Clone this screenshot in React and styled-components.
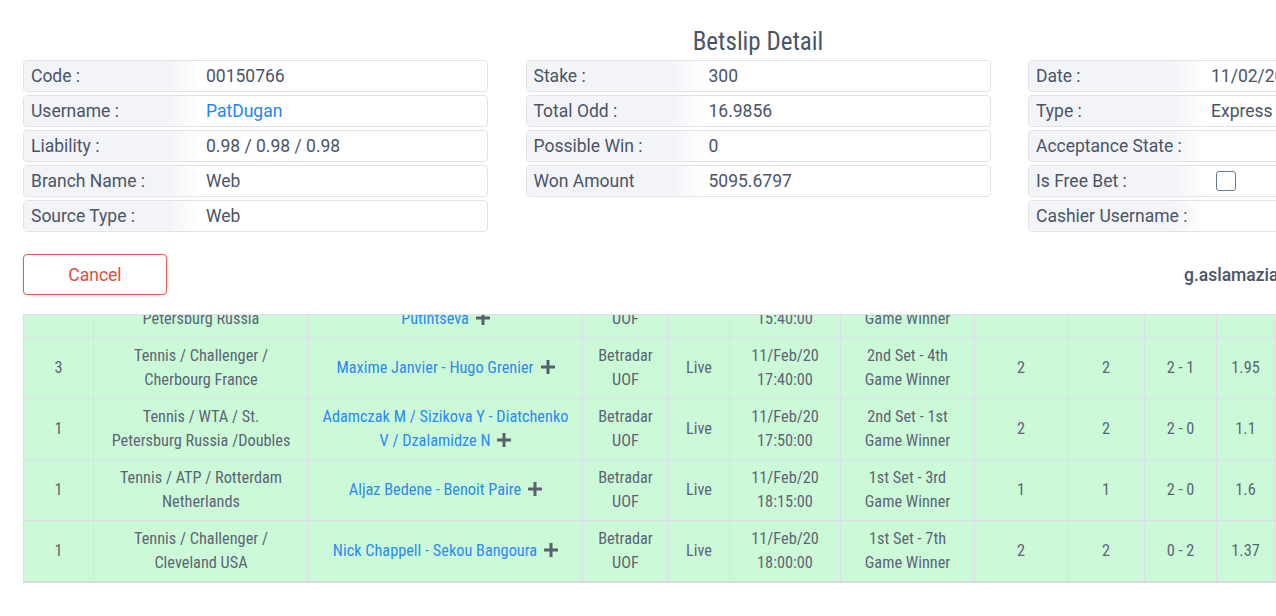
import React, { useLayoutEffect, useRef } from 'react';
import styled, { createGlobalStyle } from 'styled-components';

const GlobalStyle = createGlobalStyle`
  html, body {
    margin: 0;
    padding: 0;
    background: #fff;
    overflow: hidden;
  }
  body {
    font-family: Roboto, "Liberation Sans", sans-serif;
    color: #4a5468;
  }
`;

const Page = styled.div`
  width: 1276px;
  height: 616px;
  display: flex;
  flex-direction: column;
  overflow: hidden;
`;

const Header = styled.div`
  flex-shrink: 0;
  width: 1470px;
  padding: 27px 0 19px 23px;
  background: #fff;
`;

const Title = styled.h2`
  margin: 0 0 3px;
  height: 30px;
  line-height: 30px;
  text-align: center;
  font-family: "Roboto Condensed", Roboto, sans-serif;
  font-weight: 400;
  font-size: 25px;
  color: #4a5468;
`;

const Grid = styled.div`
  display: grid;
  grid-template-columns: repeat(3, 465px);
  column-gap: 37.5px;
`;

const FieldColumn = styled.div`
  display: flex;
  flex-direction: column;
  gap: 3px;
`;

const Field = styled.div`
  box-sizing: border-box;
  height: 32px;
  display: flex;
  align-items: stretch;
  border: 1px solid #e1e3e9;
  border-radius: 4px;
  overflow: hidden;
  font-size: 17.5px;
`;

const Label = styled.div`
  flex: 0 0 175px;
  box-sizing: border-box;
  display: flex;
  align-items: center;
  padding-left: 7px;
  background: linear-gradient(90deg, #f3f4f7 0%, #f3f4f7 82%, #ffffff 100%);
  color: #4a5468;
`;

const Value = styled.div`
  flex: 1;
  display: flex;
  align-items: center;
  padding-left: 7px;
  white-space: nowrap;
  color: ${({ $link }) => ($link ? '#1e87f0' : '#4a5468')};
`;

const Checkbox = styled.span`
  display: inline-block;
  box-sizing: border-box;
  width: 20px;
  height: 20px;
  margin-left: 5px;
  border: 1px solid #5f7d92;
  border-radius: 3px;
  background: #fff;
`;

const Actions = styled(Grid)`
  margin-top: 22px;
  height: 41px;
  align-items: center;
`;

const CancelButton = styled.button`
  width: 144px;
  height: 41px;
  border: 1px solid #e85a4c;
  border-radius: 4px;
  background: #fff;
  color: #e24c3e;
  font-family: Roboto, sans-serif;
  font-size: 17.5px;
  box-shadow: 0 1px 3px rgba(0, 0, 0, 0.12);
  cursor: pointer;
`;

const Operator = styled.div`
  grid-column: 3;
  padding-left: 156px;
  font-size: 17.5px;
  font-weight: 500;
  color: #4a5468;
  white-space: nowrap;
`;

const Scroller = styled.div`
  flex: 1;
  min-height: 0;
  width: 1470px;
  margin-left: 23px;
  border-top: 1px solid #e3dcea;
  overflow: hidden;
`;

const TableWrap = styled.div`
  padding-bottom: 33px;
`;

const Table = styled.table`
  width: 1470px;
  table-layout: fixed;
  border-collapse: collapse;
  background: #ccfad9;
  border-bottom: 2px solid #dadada;
  font-family: "Roboto Condensed", Roboto, sans-serif;
  font-size: 16.3px;
  color: #5c6575;
`;

const Th = styled.th`
  padding: 6px 8px;
  line-height: 24px;
  font-weight: 500;
  background: #f3f4f7;
  border: 1px solid #e3dcea;
`;

const Td = styled.td`
  height: 48px;
  padding: 6px ${({ $pad }) => $pad || 8}px;
  line-height: 24px;
  text-align: center;
  vertical-align: middle;
  border: 1px solid #e3dcea;
  border-top: none;
`;

const EventLink = styled.a`
  color: #2a8af0;
  text-decoration: none;
  cursor: pointer;
`;

const PlusIcon = styled.svg`
  display: inline-block;
  width: 14px;
  height: 14px;
  margin-left: 7px;
  vertical-align: -1px;
  fill: #59616e;
`;

const Plus = () => (
  <PlusIcon viewBox="0 0 14 14">
    <rect x="5.5" y="0" width="3" height="14" />
    <rect x="0" y="5.5" width="14" height="3" />
  </PlusIcon>
);

const widths = [70, 215, 274, 86, 61, 111, 134, 93, 77, 72, 58, 110, 109];
const headers = ['Count', 'Sport', 'Event', 'Provider', 'Type', 'Start Date', 'Market', 'Selection', 'Result', 'Score', 'Odd', 'Status', 'Win'];

const left = [
  { label: 'Code :', value: '00150766' },
  { label: 'Username :', value: 'PatDugan', link: true },
  { label: 'Liability :', value: '0.98 / 0.98 / 0.98' },
  { label: 'Branch Name :', value: 'Web' },
  { label: 'Source Type :', value: 'Web' },
];

const middle = [
  { label: 'Stake :', value: '300' },
  { label: 'Total Odd :', value: '16.9856' },
  { label: 'Possible Win :', value: '0' },
  { label: 'Won Amount', value: '5095.6797' },
];

const right = [
  { label: 'Date :', value: '11/02/2020 14:52:31' },
  { label: 'Type :', value: 'Express' },
  { label: 'Acceptance State :', value: '' },
  { label: 'Is Free Bet :', check: true },
  { label: 'Cashier Username :', value: '' },
];

const rows = [
  { count: 1, sport: 'Tennis / WTA / St. Petersburg Russia', event: 'Veronika Kudermetova - Yulia Putintseva', date: '11/Feb/20', time: '15:40:00', market: '2nd Set - 3rd Game Winner', sel: '1', res: '1', score: '1 - 1', odd: '1.75' },
  { count: 3, sport: 'Tennis / Challenger / Cherbourg France', event: 'Maxime Janvier - Hugo Grenier', date: '11/Feb/20', time: '17:40:00', market: '2nd Set - 4th Game Winner', sel: '2', res: '2', score: '2 - 1', odd: '1.95' },
  { count: 1, sport: 'Tennis / WTA / St. Petersburg Russia /Doubles', event: 'Adamczak M / Sizikova Y - Diatchenko V / Dzalamidze N', date: '11/Feb/20', time: '17:50:00', market: '2nd Set - 1st Game Winner', sel: '2', res: '2', score: '2 - 0', odd: '1.1' },
  { count: 1, sport: 'Tennis / ATP / Rotterdam Netherlands', event: 'Aljaz Bedene - Benoit Paire', date: '11/Feb/20', time: '18:15:00', market: '1st Set - 3rd Game Winner', sel: '1', res: '1', score: '2 - 0', odd: '1.6' },
  { count: 1, sport: 'Tennis / Challenger / Cleveland USA', event: 'Nick Chappell - Sekou Bangoura', date: '11/Feb/20', time: '18:00:00', market: '1st Set - 7th Game Winner', sel: '2', res: '2', score: '0 - 2', odd: '1.37' },
];

const FieldList = ({ items }) => (
  <FieldColumn>
    {items.map((f) => (
      <Field key={f.label}>
        <Label>{f.label}</Label>
        <Value $link={f.link}>{f.check ? <Checkbox /> : f.value}</Value>
      </Field>
    ))}
  </FieldColumn>
);

export default function App() {
  const scrollRef = useRef(null);

  useLayoutEffect(() => {
    const el = scrollRef.current;
    if (el) el.scrollTop = el.scrollHeight;
  }, []);

  return (
    <Page>
      <GlobalStyle />
      <Header>
        <Title>Betslip Detail</Title>
        <Grid>
          <FieldList items={left} />
          <FieldList items={middle} />
          <FieldList items={right} />
        </Grid>
        <Actions>
          <div>
            <CancelButton>Cancel</CancelButton>
          </div>
          <Operator>g.aslamazian</Operator>
        </Actions>
      </Header>
      <Scroller ref={scrollRef}>
        <TableWrap>
          <Table>
            <colgroup>
              {widths.map((w, i) => (
                <col key={i} style={{ width: w }} />
              ))}
            </colgroup>
            <thead>
              <tr>
                {headers.map((h) => (
                  <Th key={h}>{h}</Th>
                ))}
              </tr>
            </thead>
            <tbody>
              {rows.map((r, i) => (
                <tr key={i}>
                  <Td>{r.count}</Td>
                  <Td $pad={16}>{r.sport}</Td>
                  <Td>
                    <EventLink>{r.event}</EventLink>
                    <Plus />
                  </Td>
                  <Td>Betradar UOF</Td>
                  <Td>Live</Td>
                  <Td>
                    {r.date}
                    <br />
                    {r.time}
                  </Td>
                  <Td>{r.market}</Td>
                  <Td>{r.sel}</Td>
                  <Td>{r.res}</Td>
                  <Td>{r.score}</Td>
                  <Td>{r.odd}</Td>
                  <Td>Won</Td>
                  <Td>5095.68</Td>
                </tr>
              ))}
            </tbody>
          </Table>
        </TableWrap>
      </Scroller>
    </Page>
  );
}
